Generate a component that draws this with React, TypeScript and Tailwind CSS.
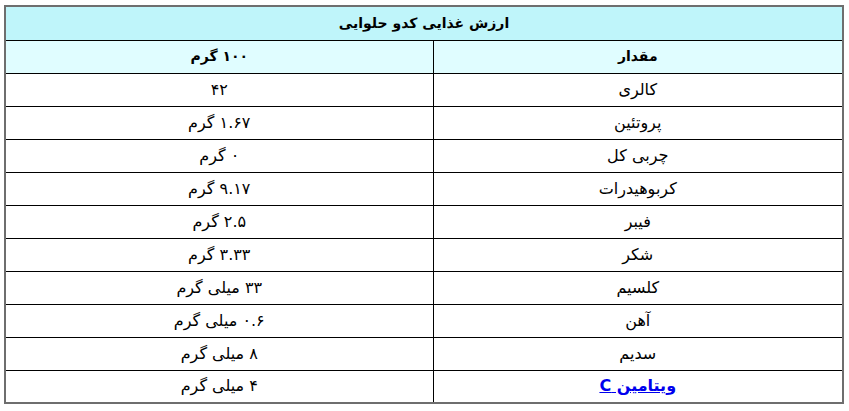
const rows: [string, string][] = [
  ["کالری", "۴۲"],
  ["پروتئین", "۱.۶۷ گرم"],
  ["چربی کل", "۰ گرم"],
  ["کربوهیدرات", "۹.۱۷ گرم"],
  ["فیبر", "۲.۵ گرم"],
  ["شکر", "۳.۳۳ گرم"],
  ["کلسیم", "۳۳ میلی گرم"],
  ["آهن", "۰.۶ میلی گرم"],
  ["سدیم", "۸ میلی گرم"],
];

export default function App() {
  return (
    <div className="bg-white w-[849px] h-[411px] pt-[5px] pl-[4px]" style={{ fontFamily: '"DejaVu Sans", sans-serif' }}>
      <table dir="rtl" className="w-[840px] border-collapse border-2 border-[#6e6e6e] text-[16px] text-black">
        <tbody>
          <tr className="h-[34px] bg-[#bff5fa]">
            <th colSpan={2} className="border border-black font-bold text-[14px] text-center">
              ارزش غذایی کدو حلوایی
            </th>
          </tr>
          <tr className="h-[33px] bg-[#e0fdff]">
            <th className="border border-black font-bold text-[14px] text-center w-[410px]">مقدار</th>
            <th className="border border-black font-bold text-[14px] text-center">۱۰۰ گرم</th>
          </tr>
          {rows.map(([k, v]) => (
            <tr key={k} className="h-[33px]">
              <td className="border border-black text-center leading-none">{k}</td>
              <td className="border border-black text-center leading-none">{v}</td>
            </tr>
          ))}
          <tr className="h-[33px]">
            <td className="border border-black text-center leading-none">
              <a href="#" className="font-bold text-[16px] text-[#0000ee] underline">ویتامین C</a>
            </td>
            <td className="border border-black text-center leading-none">۴ میلی گرم</td>
          </tr>
        </tbody>
      </table>
    </div>
  );
}
